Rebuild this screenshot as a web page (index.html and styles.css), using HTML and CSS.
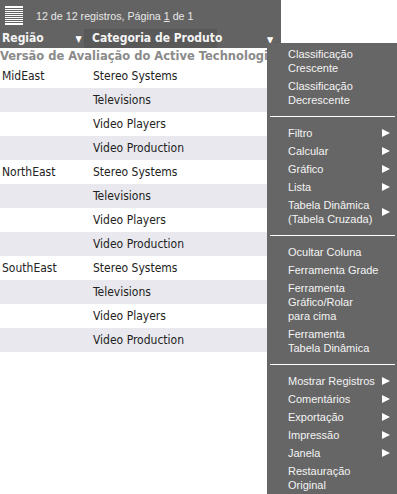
FILE: index.html
```html
<!DOCTYPE html>
<html lang="pt">
<head>
    <meta charset="UTF-8">
    <title>Relatório</title>
    <link rel="stylesheet" href="styles.css">
</head>
<body>
    <div class="report">
        <div class="toolbar">
            <svg class="menu-icon" width="18" height="19" viewBox="0 0 18 19">
                <rect x="0" y="0" width="18" height="2" fill="#fff"/>
                <rect x="0" y="3" width="18" height="1" fill="#fff"/>
                <rect x="0" y="5" width="18" height="1" fill="#fff"/>
                <rect x="0" y="7" width="18" height="1" fill="#fff"/>
                <rect x="0" y="9" width="18" height="1" fill="#fff"/>
                <rect x="0" y="11" width="18" height="1" fill="#fff"/>
                <rect x="0" y="13" width="18" height="1" fill="#fff"/>
                <rect x="0" y="15" width="18" height="1" fill="#fff"/>
                <rect x="0" y="17" width="18" height="2" fill="#fff"/>
            </svg>
            <span class="pager">12 de 12 registros, Página <u>1</u> de 1</span>
        </div>
        <div class="head-row">
            <div class="head-cell region">Região <span class="sort">▼</span></div>
            <div class="head-cell category">Categoria de Produto</div>
            <span class="sort last">▼</span>
        </div>
        <div class="watermark">Versão de Avaliação do Active Technologies</div>

        <div class="rows">
            <div class="row"><span class="c1">MidEast</span><span class="c2">Stereo Systems</span></div>
            <div class="row alt"><span class="c1"></span><span class="c2">Televisions</span></div>
            <div class="row"><span class="c1"></span><span class="c2">Video Players</span></div>
            <div class="row alt"><span class="c1"></span><span class="c2">Video Production</span></div>
            <div class="row"><span class="c1">NorthEast</span><span class="c2">Stereo Systems</span></div>
            <div class="row alt"><span class="c1"></span><span class="c2">Televisions</span></div>
            <div class="row"><span class="c1"></span><span class="c2">Video Players</span></div>
            <div class="row alt"><span class="c1"></span><span class="c2">Video Production</span></div>
            <div class="row"><span class="c1">SouthEast</span><span class="c2">Stereo Systems</span></div>
            <div class="row alt"><span class="c1"></span><span class="c2">Televisions</span></div>
            <div class="row"><span class="c1"></span><span class="c2">Video Players</span></div>
            <div class="row alt"><span class="c1"></span><span class="c2">Video Production</span></div>
        </div>
    </div>

    <div class="context-menu">
        <div class="item">Classificação<br>Crescente</div>
        <div class="item">Classificação<br>Decrescente</div>
        <hr>
        <div class="item sub">Filtro</div>
        <div class="item sub">Calcular</div>
        <div class="item sub">Gráfico</div>
        <div class="item sub">Lista</div>
        <div class="item sub">Tabela Dinâmica<br>(Tabela Cruzada)</div>
        <hr>
        <div class="item">Ocultar Coluna</div>
        <div class="item">Ferramenta Grade</div>
        <div class="item">Ferramenta<br>Gráfico/Rolar<br>para cima</div>
        <div class="item">Ferramenta<br>Tabela Dinâmica</div>
        <hr>
        <div class="item sub">Mostrar Registros</div>
        <div class="item sub">Comentários</div>
        <div class="item sub">Exportação</div>
        <div class="item sub">Impressão</div>
        <div class="item sub">Janela</div>
        <div class="item">Restauração<br>Original</div>
    </div>
</body>
</html>
```

FILE: styles.css
```css
body {
    margin: 0;
    background: #fff;
    font-family: "DejaVu Sans Condensed", "DejaVu Sans", sans-serif;
    overflow: hidden;
}
.report {
    width: 281px;
}
.toolbar {
    height: 27px;
    background: #636363;
    display: flex;
    align-items: center;
    padding-left: 5px;
    padding-top: 2px;
}
.menu-icon {
    display: block;
}
.pager {
    margin-left: 13px;
    font-family: "Liberation Sans", Arial, sans-serif;
    font-size: 10.7px;
    color: #e8e8e8;
}
.head-row {
    height: 19px;
    background: #636363;
    display: flex;
    align-items: stretch;
    white-space: nowrap;
}
.head-cell {
    font-weight: bold;
    font-size: 12px;
    color: #f4f4f4;
    line-height: 19px;
}
.region {
    width: 84px;
    padding-left: 2px;
    box-sizing: border-box;
}
.category {
    width: 133px;
    background: #595959;
    padding-left: 8px;
    box-sizing: border-box;
}
.sort {
    font-size: 9px;
    color: #fff;
    margin-left: 28px;
}
.sort.last {
    margin-left: 50px;
    line-height: 23px;
}
.watermark {
    height: 16px;
    font-family: "DejaVu Sans", sans-serif;
    font-weight: bold;
    font-size: 11.5px;
    color: #8a8a8a;
    white-space: nowrap;
    line-height: 16px;
}
.row {
    height: 24px;
    display: flex;
    align-items: center;
    font-size: 12px;
    color: #222;
}
.row.alt {
    background: #e8e8ee;
}
.c1 {
    width: 93px;
    padding-left: 2px;
    box-sizing: border-box;
}
.context-menu {
    position: absolute;
    left: 267px;
    top: 43px;
    width: 130px;
    height: 451px;
    background: #666;
    font-family: "Liberation Sans", Arial, sans-serif;
    font-size: 11px;
    color: #f4f4f4;
    padding-top: 2px;
    box-sizing: border-box;
}
.item {
    line-height: 14px;
    padding: 2px 4px 2px 21px;
    position: relative;
    white-space: nowrap;
}
.item.sub::after {
    content: "";
    position: absolute;
    right: 7px;
    top: 50%;
    margin-top: -4px;
    border-left: 8px solid #fff;
    border-top: 4px solid transparent;
    border-bottom: 4px solid transparent;
}
hr {
    border: 0;
    border-top: 1px solid #fff;
    margin: 7px 2px 7px 3px;
}
```
